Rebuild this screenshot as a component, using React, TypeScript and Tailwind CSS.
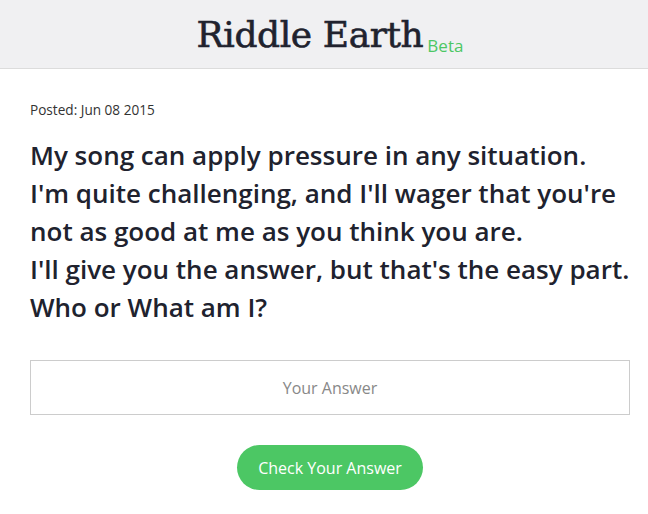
import React from 'react';

const App: React.FC = () => {
  return (
    <div className="min-h-screen bg-white font-['Open_Sans',sans-serif]">
      <header className="h-[69px] bg-[#f0f0f2] border-b border-[#dcdcdc] flex items-center justify-center">
        <div className="flex items-end pt-[2px] ml-[12px]">
          <h1 className="text-[36px] leading-none text-[#20222e] font-['DejaVu_Serif',serif] font-normal tracking-[-0.4px] [-webkit-text-stroke:0.6px_#20222e]">
            Riddle Earth
          </h1>
          <span className="ml-[4px] text-[17px] leading-none text-[#4cc764] -mb-[1px]">Beta</span>
        </div>
      </header>

      <main className="pl-[30px] pt-[32px]">
        <div className="w-[600px]">
          <p className="text-[13.6px] text-[#333] leading-[18px]">Posted: Jun 08 2015</p>
          <h2 className="mt-[17px] text-[26px] leading-[38px] font-semibold text-[#20222e]">
            My song can apply pressure in any situation.
            <br />
            I'm quite challenging, and I'll wager that you're not as good at me as you think you are.
            <br />
            I'll give you the answer, but that's the easy part.
            <br />
            Who or What am I?
          </h2>

          <input
            type="text"
            placeholder="Your Answer"
            className="mt-[34px] block w-full h-[55px] border border-[#cccccc] text-center text-[16px] text-[#555] placeholder:text-[#888] outline-none"
          />

          <div className="flex justify-center mt-[30px]">
            <button className="w-[186px] h-[45px] rounded-full bg-[#4cc764] text-white text-[16px]">
              Check Your Answer
            </button>
          </div>
        </div>
      </main>
    </div>
  );
};

export default App;
